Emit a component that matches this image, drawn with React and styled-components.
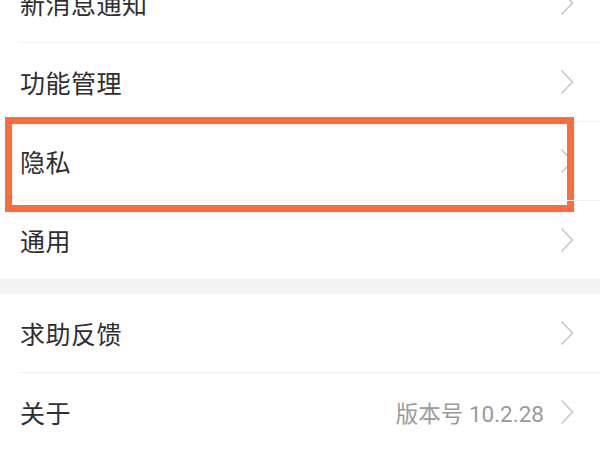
import styled, { createGlobalStyle } from "styled-components";

const GlobalStyle = createGlobalStyle`
  html, body {
    margin: 0;
    padding: 0;
    background: #ffffff;
    overflow: hidden;
  }
  body {
    font-family: "Noto Sans CJK SC", "Noto Sans", sans-serif;
  }
`;

const Page = styled.div`
  width: 600px;
  height: 450px;
  overflow: hidden;
  background: #ffffff;
`;

const Group = styled.div`
  display: flex;
  flex-direction: column;
  background: #ffffff;
  margin-top: ${({ $offset }) => $offset || 0}px;
`;

const Gap = styled.div`
  height: 15px;
  background: #f4f4f4;
`;

const Row = styled.div`
  position: relative;
  display: flex;
  align-items: center;
  height: 78px;
  padding: 0 26px 0 20px;
  box-sizing: content-box;
  border-bottom: ${({ $last }) => ($last ? "none" : "1px solid transparent")};

  &::after {
    content: "";
    display: ${({ $last }) => ($last ? "none" : "block")};
    position: absolute;
    left: 18px;
    right: 0;
    bottom: -1px;
    height: 1px;
    background: #f1f1f1;
  }
`;

const Label = styled.span`
  flex: 1;
  font-size: 25px;
  color: #2e2e2e;
  letter-spacing: 0.5px;
`;

const Value = styled.span`
  font-family: "Roboto", "Noto Sans CJK SC", sans-serif;
  font-size: 22.5px;
  color: #9a9a9a;
  margin-right: 16px;
`;

const Highlight = styled.div`
  position: absolute;
  top: -5px;
  bottom: -12px;
  left: 5px;
  right: 26px;
  border: 7px solid #ff6b3b;
  pointer-events: none;
`;

function Chevron() {
  return (
    <svg width="14" height="26" viewBox="0 0 14 26" fill="none">
      <path d="M1.5 1.5 L12.5 13 L1.5 24.5" stroke="#c8c8c8" strokeWidth="1.6" />
    </svg>
  );
}

function Item({ label, value, last, highlight }) {
  return (
    <Row $last={last}>
      <Label>{label}</Label>
      {value && <Value>{value}</Value>}
      <Chevron />
      {highlight && <Highlight />}
    </Row>
  );
}

export default function App() {
  return (
    <>
      <GlobalStyle />
      <Page>
        <Group $offset={-36}>
          <Item label="新消息通知" />
          <Item label="功能管理" />
          <Item label="隐私" highlight />
          <Item label="通用" last />
        </Group>
        <Gap />
        <Group>
          <Item label="求助反馈" />
          <Item label="关于" value="版本号 10.2.28" last />
        </Group>
      </Page>
    </>
  );
}
